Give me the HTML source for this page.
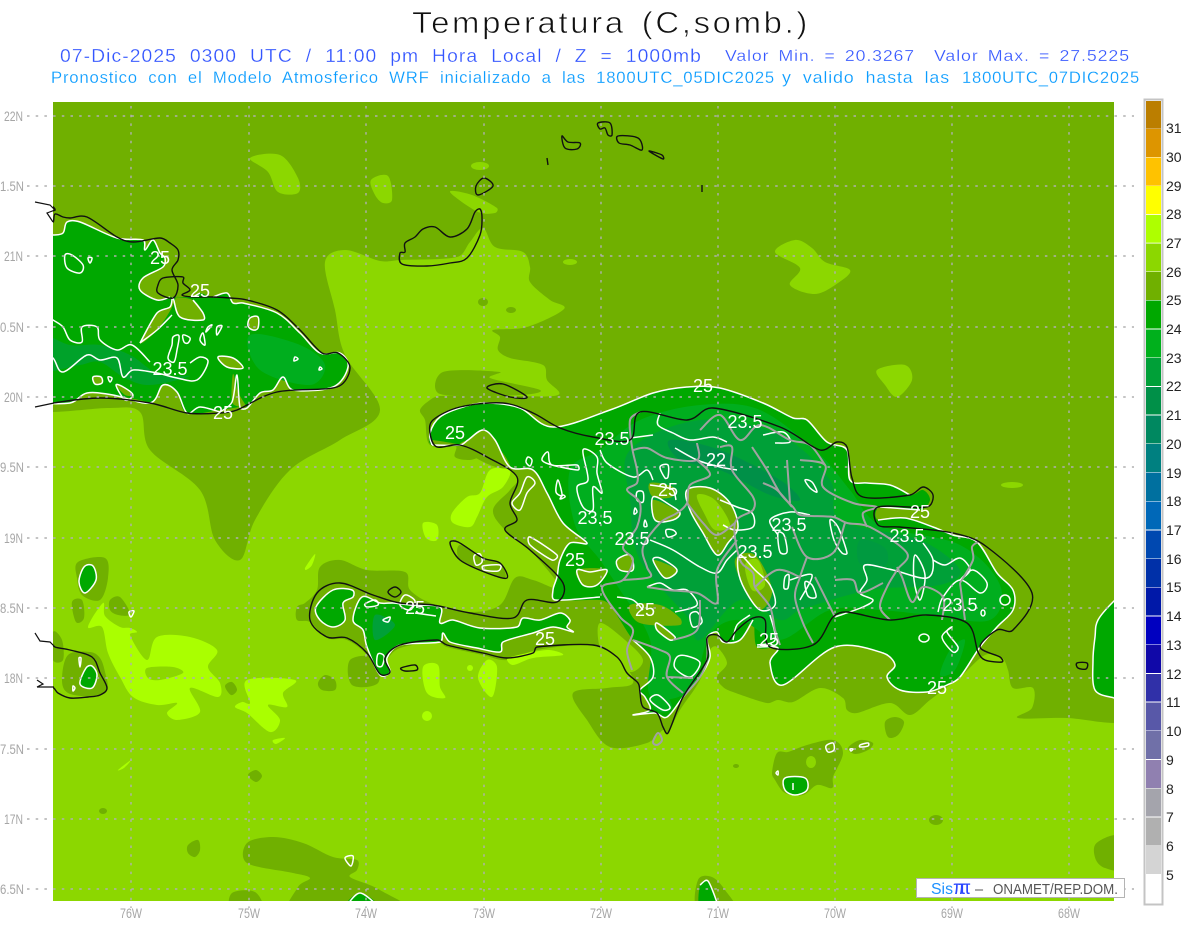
<!DOCTYPE html>
<html><head><meta charset="utf-8"><title>Temperatura</title>
<style>
html,body{margin:0;padding:0;background:#fff}
svg{display:block}
text{font-family:"Liberation Sans",sans-serif}
.ax{fill:#a6a6a6;font-size:14px}
.lb{fill:#fff;font-size:18px;text-anchor:middle}
.cb{fill:#222;font-size:14px}
.w{fill:none;stroke:#fff;stroke-width:1.5;stroke-linejoin:round}
.k{fill:none;stroke:#111;stroke-width:1.4;stroke-linejoin:round}
.g{fill:none;stroke:#a2a2a2;stroke-width:2;stroke-linejoin:round}
.d{fill:#70b000}.l{fill:#8cd700}.y{fill:#aaff00}.v{fill:#00a800}
</style></head><body>
<svg width="1200" height="927" viewBox="0 0 1200 927" xmlns="http://www.w3.org/2000/svg">
<rect width="1200" height="927" fill="#fff"/>
<text x="412" y="33" font-size="31" textLength="398" lengthAdjust="spacingAndGlyphs" fill="#111" stroke="#fff" stroke-width=".7" style="letter-spacing:2.5px;word-spacing:4px">Temperatura (C,somb.)</text>
<g fill="#3355ff" stroke="#fff" stroke-width=".25">
<text x="60" y="62" font-size="18" textLength="642" lengthAdjust="spacingAndGlyphs" style="letter-spacing:1px;word-spacing:6px">07-Dic-2025 0300 UTC / 11:00 pm Hora Local / Z = 1000mb</text>
<text x="725" y="61" font-size="16" textLength="190" lengthAdjust="spacingAndGlyphs" style="letter-spacing:.8px;word-spacing:3px">Valor Min. = 20.3267</text>
<text x="934" y="61" font-size="16" textLength="196" lengthAdjust="spacingAndGlyphs" style="letter-spacing:.8px;word-spacing:3px">Valor Max. = 27.5225</text>
</g>
<g fill="#0a9cff" font-size="17" stroke="#fff" stroke-width=".2">
<text x="51" y="83" textLength="724" lengthAdjust="spacingAndGlyphs" style="letter-spacing:.8px;word-spacing:5px">Pronostico con el Modelo Atmosferico WRF inicializado a las 1800UTC_05DIC2025</text>
<text x="782" y="83" textLength="168" lengthAdjust="spacingAndGlyphs" style="letter-spacing:.8px;word-spacing:5px">y valido hasta las</text>
<text x="962" y="83" textLength="178" lengthAdjust="spacingAndGlyphs" style="letter-spacing:.8px">1800UTC_07DIC2025</text>
</g>

<svg id="map" x="53" y="102" width="1061" height="799" viewBox="53 102 1061 799">
<rect x="53" y="102" width="1061" height="799" class="l"/>
<!-- dark band north / east -->
<path class="d" d="M-20,60L1200,60L1200,723L1114,723L1067,718L1018,718L1032,708L1033,688L1013,688L1008,670L1002,658L985,655L960,677L930,700L910,715L890,703L857,713L847,710L843,698L820,688L793,702L778,700L767,703L733,692L723,687L717,677L727,663L717,647L710,650L700,680L680,710L668,733L663,730L647,743L610,747L587,720L573,693L607,688L633,683L620,660L593,645L537,650L507,660L483,655L447,647L437,642L400,648L387,660L380,677L367,655L347,640L327,638L310,622L297,620L297,607L305,603L317,590L320,567L340,560L367,570L405,572L410,590L433,604L470,612L500,605L515,578L533,580L560,588L530,550L505,530L493,510L510,490L517,477L487,457L470,460L455,457L455,445L430,445L425,420L420,410L430,400L440,396L510,396L558,395L547,380L543,365L510,358L498,350L500,337L493,330L527,327L564,309L550,300L530,282L530,267L523,252L495,247L483,228L470,242L457,257L400,260L380,261L345,250L325,262L335,310L345,355L380,410L340,440L290,470L255,520L240,560L215,540L200,490L150,450L140,412L110,408L53,412L-20,412Z"/>
<path class="d" d="M443,372L500,372L490,378L540,390L520,395L440,394Z"/>
<!-- light patches in the dark -->
<g class="l">
<path d="M371,180L388,176L392,200L383,203L375,195Z"/>
<path d="M250,158L280,155L298,178L298,193L278,192L268,172Z"/>
<path d="M450,192L472,195L497,208L495,213L478,212Z"/>
<ellipse cx="480" cy="166" rx="9" ry="4"/><ellipse cx="570" cy="262" rx="7" ry="3"/>
<path d="M775,252L795,240L812,248L825,262L850,270L838,283L815,294L790,285L800,268Z"/>
<path d="M877,370L905,365L912,380L897,397L885,385Z"/>
<ellipse cx="1012" cy="485" rx="11" ry="3"/>
<path d="M600,623L625,640L643,660L630,672L612,655L600,648Z"/>
</g>
<!-- dark blobs on light -->
<g class="d">
<ellipse cx="483" cy="302" rx="5" ry="4"/><ellipse cx="511" cy="310" rx="5" ry="3"/>
<path d="M78,562L105,558L108,578L100,600L82,595L77,578Z"/>
<path d="M72,602L82,600L84,618L76,622Z"/>
<path d="M110,600L120,597L130,614L118,615L110,610Z"/>
<path d="M68,655L90,652L100,658L105,672L107,690L90,696L68,693L62,680Z"/>
<path d="M53,632L62,640L63,660L53,660Z"/>
<path d="M225,686L232,682L237,690L231,695Z"/>
<path d="M318,683L325,675L335,680L335,690L322,690Z"/>
<path d="M248,775L256,770L262,776L256,782Z"/>
<path d="M188,845L198,840L200,850L195,857L188,853Z"/>
<ellipse cx="103" cy="811" rx="4" ry="3"/>
<path d="M247,843L273,837L303,843L333,857L357,860L357,870L350,877L380,890L410,915L290,915L298,887L310,878L293,873L247,863Z"/>
<path d="M232,893L255,892L262,910L232,910Z"/>
<path d="M772,773L777,753L788,752L807,745L833,740L843,753L833,777L832,788L817,785L803,795L785,793L775,780Z"/>
<path d="M848,748L860,740L873,743L868,750L855,754Z"/>
<path d="M885,722L895,717L904,722L898,735L888,737Z"/>
<ellipse cx="936" cy="820" rx="7" ry="5"/>
<ellipse cx="736" cy="766" rx="3" ry="2"/>
<path d="M1095,845L1110,836L1120,838L1120,868L1105,868L1096,860Z"/>
<path d="M698,880L712,877L725,890L735,910L698,910Z"/>
<path d="M350,660L375,658L378,683L352,685Z"/>
</g>
<ellipse class="l" cx="811" cy="762" rx="5" ry="6"/>
<!-- bright yellow-green -->
<g class="y">
<path fill-rule="evenodd" d="M88,627L103,603L105,616L120,627L130,628L137,632L130,635L147,660L157,637L190,637L217,650L208,667L220,683L218,697L190,688L200,712L177,720L167,713L177,703L157,705L133,697L120,677L108,653L102,627ZM147,668L173,667L183,673L160,680L148,678Z"/>
<path d="M247,680L295,680L283,693L287,707L268,705L280,720L270,732L247,713L235,707L242,702L250,703Z"/>
<path d="M305,568L315,554L312,565L306,570Z"/><path d="M118,770L131,760L124,768Z"/>
<path d="M273,740L285,738L276,744Z"/>
<path d="M423,667L438,665L440,687L445,698L427,693Z"/>
<path d="M478,678L487,660L497,667L492,697Z"/>
<path d="M508,658L547,650L563,655L533,658L513,665Z"/>
<circle cx="427" cy="716" r="5"/><circle cx="470" cy="668" r="3"/>
<path d="M452,513L467,497L480,493L490,470L510,470L503,487L487,497L477,517L470,527L453,523Z"/>
<path d="M423,523L437,525L437,540L426,538Z"/>
</g>

<!-- CUBA -->
<path class="v" d="M30,235L53,235L63,233L67,222L80,222L117,238L143,240L145,250L153,240L160,253L165,258L163,267L143,278L140,290L157,300L170,297L193,297L200,293L213,297L227,293L233,303L243,303L277,313L300,333L320,353L340,353L348,367L333,387L293,390L283,377L273,390L260,393L247,408L240,407L220,410L187,413L177,392L163,385L150,403L113,395L87,393L70,403L53,403L30,403Z"/>
<path fill="#00a038" d="M40,335L70,345L100,345L130,355L160,375L190,376L150,385L125,378L100,362L80,365L40,370Z" opacity=".75"/>
<path fill="#00ae1e" d="M250,335L300,345L325,365L310,385L260,370Z"/>
<g class="d">
<path d="M140,343L157,313L170,307L173,298L180,317L203,320L203,313L193,300L170,297L157,300L140,290L143,278L163,267L165,258L180,262L175,300L157,330Z"/>
<path d="M218,357L233,358L243,368L227,367Z"/>
<path d="M250,318L258,317L258,328L253,330L248,326Z"/>
<path d="M116,385L125,388L133,395L125,395Z"/>
<path d="M93,377L101,377L102,383L95,384Z"/>
<path d="M95,395L113,395L150,403L100,400Z"/>
<path d="M233,374L238,392L247,408L240,407L232,402Z"/>
</g>
<g class="w">
<path d="M30,236L53,235L63,233L67,222L80,222L117,238L143,240L145,250L153,240L160,253L165,258L163,267L143,278L140,290L157,300L170,297"/>
<path d="M193,297L200,293M213,297L227,293L233,303L243,303L277,313L300,333L320,353L340,353L348,367L333,387L293,390L283,377L273,390L260,393L247,408L240,407L237,375L232,402L220,412"/>
<path d="M30,403L70,403L87,393L113,395L150,403L163,385L177,392L187,413L200,407L220,412"/>
<path d="M140,343L157,313L170,307L173,298L180,317L203,320L203,313L193,300"/>
<path d="M140,343L157,330L172,315"/>
<path d="M40,312L53,320L63,327L70,340L82,342L82,327L97,327L100,340L117,350L132,345L150,362"/>
<path d="M40,350L53,358L63,372L87,355L100,360L117,358L123,377L133,370L157,373L177,378L197,380L208,362L200,357L190,363"/>
<path d="M65,255L72,255L83,265L80,273L67,268Z"/><path d="M88,258L92,258L90,263Z"/>
<path d="M218,357L233,358L243,368L227,367Z"/>
<path d="M250,318L258,317L258,328L253,330L248,326Z"/>
<path d="M93,377L101,377L102,383L95,384Z"/><path d="M116,385L125,388L133,395L125,400Z"/>
<path d="M173,337L179,336L177,350L174,362L168,358L172,345Z"/>
<path d="M183,335L190,338L188,343L184,342Z"/><path d="M203,333L205,345L200,340Z"/>
<path d="M208,327L212,325L206,332Z"/><path d="M217,327L222,326L217,335Z"/>
<path d="M108,377L112,378L110,382Z"/>
<path d="M295,357L298,359L294,361Z"/><path d="M320,367L322,369L319,370Z"/>
</g>

<!-- HISPANIOLA green -->
<path class="v" d="M432,445L430,433L440,417L463,407L487,403L520,408L553,427L610,410L653,393L687,387L720,388L763,403L793,418L807,420L827,442L847,450L850,480L867,483L890,485L910,495L923,490L930,500L920,510L880,507L878,520L905,518L933,527L953,535L977,542L997,573L1013,590L1013,610L997,627L980,647L960,677L947,685L927,692L900,690L887,677L895,665L883,653L835,647L783,685L770,663L778,648L757,647L753,620L740,640L723,642L717,632L707,638L710,657L700,677L683,697L667,717L655,713L633,715L650,710L645,697L640,690L653,677L650,657L633,640L620,620L610,605L600,600L555,600L553,590L557,577L560,560L570,543L587,543L563,523L547,493L533,470L510,467L495,440L483,430L468,440L460,445Z"/>
<path class="v" d="M353,620L362,597L380,603L393,603L410,605L440,607L440,623L453,620L480,628L517,627L523,618L540,620L560,613L570,620L567,627L573,632L553,627L533,633L503,642L500,652L477,648L450,642L443,633L440,642L400,645L387,658L390,672L380,675L367,647L363,630Z"/>
<path class="v" d="M316,607L333,590L352,590L353,597L343,603L345,620L333,627L320,620Z"/>
<!-- inner greens -->
<path fill="#00ae1e" d="M570,470L600,450L640,420L700,405L760,410L820,455L850,490L880,525L960,545L1000,585L990,620L930,615L880,610L830,610L780,640L740,620L710,635L690,690L650,695L650,640L620,590L600,560L575,525Z"/>
<path fill="#00a038" d="M630,450L700,420L780,435L830,480L840,520L920,540L960,570L940,585L870,590L800,610L780,620L740,600L700,640L690,620L640,560L630,500Z"/>
<path fill="#009048" d="M670,440L720,450L780,480L800,500L770,495L720,470L680,460Z"/>
<path fill="#009a40" d="M860,540L885,548L885,566L860,564Z"/>
<path fill="#00a038" d="M375,615L395,625L375,640Z"/><path fill="#00ae1e" d="M650,700L665,695L672,708L660,712Z"/>
<path fill="#00ae1e" d="M950,650L965,640L955,670L940,675Z"/>
<!-- olive patches inside -->
<g class="d">
<path d="M687,490L710,488L730,503L738,527L728,543L717,555L703,533L690,510Z"/>
<path d="M735,560L755,555L772,590L760,610L745,590Z"/>
<path d="M650,483L673,487L672,497L653,497Z"/>
<path d="M653,500L680,513L673,520L655,520Z"/>
<path d="M617,560L630,555L633,570L620,570Z"/>
<path d="M653,560L677,570L665,578Z"/>
<path d="M657,623L675,637L670,640L657,630Z"/>
<path d="M630,605L660,605L680,618L680,625L650,625L635,620Z"/>
<path d="M530,537L557,555L552,560L530,545Z"/>
<path d="M470,440L495,445L510,467L490,465L460,447Z"/>
<path d="M520,493L527,477L535,483L527,493L520,510L512,503Z"/>
<path d="M430,440L460,445L440,447Z"/>
<path d="M460,545L483,558L500,563L505,578L485,572L460,560Z"/>
<path d="M577,570L607,570L597,585L583,585Z"/>
</g>
<g class="l"><path d="M697,495L715,500L730,525L715,530L705,515Z"/><path d="M745,565L758,560L765,585L752,590Z"/></g>
<!-- east & bottom green -->
<path class="v" d="M1120,598L1114,601L1098,620L1095,637L1093,660L1095,690L1114,698L1120,700Z"/>
<path class="v" d="M347,905L360,893L377,905Z"/>
<path class="v" d="M700,910L700,885L708,881L718,910Z"/>
<path class="v" d="M785,778L805,778L807,790L795,795L785,790Z"/>
<path class="v" d="M84,567L93,566L96,580L85,593L79,582Z"/>
<path class="v" d="M86,668L92,666L97,675L92,688L80,684Z"/>
<!-- contours -->
<g class="w">
<path d="M432,445L430,433L440,417L463,407L487,403L520,408L553,427L610,410L653,393L687,387L720,388L763,403L793,418L807,420L827,442L847,450L850,480L867,483L890,485L910,495"/>
<path d="M880,507L920,510M878,520L905,518L933,527L953,535L977,542L997,573L1013,590L1013,610L997,627L980,647L960,677L947,685L927,692L900,690L887,677L895,665L883,653L835,647L783,685L770,663L778,648L757,647"/>
<path d="M432,445L460,445L468,440L483,430L495,440L510,467L533,470L547,493L563,523L587,543L570,543L560,560L557,577L553,590L555,600L600,597"/>
<path d="M353,620L362,597L380,603L393,603L410,605L440,607L440,623L453,620L480,628L517,627L523,618L540,620L560,613L570,620L567,627L573,632L553,627L533,633L503,642L500,652L477,648L450,642L443,633L440,642L400,645L387,658L390,672L380,675L367,647L363,630Z"/>
<path d="M316,607L333,590L352,590L353,597L343,603L345,620L333,627L320,620Z"/>
<path d="M1120,598L1114,601L1098,620L1095,637L1093,660L1095,690L1114,698L1120,700"/>
<path d="M347,905L360,893L377,905"/>
<path d="M700,885L708,881L718,905"/>
<path d="M785,778L805,778L807,790L795,795L785,790Z"/><path d="M793,783L793,790"/>
<path d="M84,567L93,566L96,580L85,593L79,582Z"/>
<path d="M86,668L92,666L97,675L92,688L80,684Z"/><path d="M79,658L81,658L80,667Z"/><path d="M73,686L75,688L73,691Z"/>
<path d="M129,612L134,611L131,617Z"/>
<path d="M826,746L833,743L834,750L828,752Z"/><path d="M860,745L868,743L868,746L860,747Z"/><path d="M850,749L853,749L851,751Z"/>
<path d="M345,858L353,856L351,866Z"/>
<path d="M776,773L778,771L778,775Z"/>
<path d="M378,654L384,656L382,666L377,665Z"/><path d="M383,620L390,617L388,622Z"/>
<path d="M365,604L375,600L378,605L367,607Z"/>
<path d="M405,595L415,601L410,610L400,605Z"/>
<path d="M415,613L436,616"/>
<!-- Haiti interior -->
<path d="M583,450L597,457L597,473L602,493L593,487L593,510L583,507L577,487L588,480Z"/>
<path d="M542,460L548,452L552,465L577,465L578,470L552,465Z"/>
<path d="M528,457L532,460L530,466L526,462Z"/><path d="M558,480L562,495L556,492Z"/><path d="M563,495L565,497L560,499Z"/>
<path d="M527,477L535,483L527,493L520,510L512,503L520,493Z"/>
<path d="M530,537L557,555L552,560L530,545Z"/>
<path d="M474,556L480,554L482,562L476,565Z"/><path d="M483,566L500,565L498,571L484,570Z"/>
<path d="M577,570L590,572L607,570L597,585L583,585Z"/>
<path d="M600,450L607,463L633,477L647,470L653,480"/>
<path d="M660,413L658,425L673,433L690,440L713,437L727,442"/>
<path d="M630,438L653,435"/>
<path d="M675,448L697,460L720,467L737,470"/>
<path d="M660,467L668,465L668,477L665,478Z"/>
<path d="M637,492L643,492L643,502L637,500Z"/>
<path d="M650,485L663,487L673,490L676,500"/>
<path d="M653,497L655,520L673,520L680,513L670,505Z"/>
<path d="M635,508L637,512L634,514Z"/><path d="M645,520L647,526L644,526Z"/>
<path d="M666,530L673,530L676,534L668,537Z"/>
<path d="M650,540L673,550L700,567L717,573L727,560L737,550"/>
<path d="M617,560L630,555L633,570L620,570Z"/><path d="M653,560L660,558L677,570L665,578Z"/>
<path d="M647,587L660,583L673,590L687,590L697,605L675,612"/>
<path d="M617,597L633,600L643,610"/>
<path d="M687,490L710,488L730,503L738,527L728,543L717,555L703,533L690,510Z"/>
<!-- Barahona -->
<path d="M633,640L650,657L653,677L640,690L645,697L650,710L633,715L655,713L667,717L683,697L700,677L710,657L707,638L717,632L723,642L740,640L753,620"/>
<path d="M657,623L675,637L670,640L657,630Z"/>
<path d="M677,657L687,656L700,663L690,677L675,668Z"/>
<path d="M650,700L658,695L670,707L663,710Z"/>
<path d="M690,615L697,612L702,622L693,627Z"/>
<!-- DR interior -->
<path d="M763,435L783,432L790,442L775,443"/>
<path d="M720,500L737,507L752,513L753,527L735,530L723,525"/>
<path d="M778,533L784,535L787,552L780,552Z"/>
<path d="M785,577L789,575L788,588L784,588Z"/>
<path d="M805,582L812,585L816,597L808,596Z"/>
<path d="M805,480L812,482L817,492L810,488Z"/>
<path d="M830,520L838,527L847,553L842,553L834,540Z"/>
<path d="M835,617L863,607L873,600L860,593L867,580L865,565L893,570L927,578L933,560L923,543"/>
<path d="M933,560L945,565L960,558L970,570L960,580L973,570L987,583L980,593L960,580L943,597L938,612"/>
<ellipse cx="1005" cy="600" rx="5" ry="5" transform="rotate(35 1005 600)"/><ellipse cx="983" cy="613" rx="2" ry="3"/>
<path d="M942,637L952,627L947,632L958,647L953,652Z"/>
<ellipse cx="924" cy="638" rx="5" ry="4"/>
<path d="M740,555L755,570L770,585L775,605L760,610L745,590L738,570Z"/>
<path d="M778,535L770,520L790,512L810,515"/>
<path d="M800,600L812,575L790,580"/>
<path d="M915,555L925,575L920,600L914,580Z"/>
<path d="M770,615L775,640L757,645"/>
<path d="M733,640L737,625L750,615"/>
</g>

<!-- provincial borders -->
<g class="g">
<path d="M640,412L630,420L632,447L637,470L637,483L627,490L640,503L637,527L623,547L633,560L623,580L602,588L620,617L633,630L627,650L632,670"/>
<path d="M720,447L732,447L732,470L753,497L753,510L735,523L740,560L753,573L755,587L770,607L775,630L780,645"/>
<path d="M752,447L767,470L780,493L793,507L800,515L833,517L847,523L870,527L907,553L897,570L887,587L880,607L890,620"/>
<path d="M787,460L790,503M800,460L825,465L823,487L853,503L877,507L863,513L867,527"/>
<path d="M763,483L777,490L792,507M792,527L807,557L833,553L845,523M800,577L777,570L755,587M807,557L800,577L795,597L803,623L813,643"/>
<path d="M815,577L830,607L835,617M835,580L853,580L860,593L883,583"/>
<path d="M897,567L902,577L912,602L923,587L943,597L942,620M960,583L965,620M960,583L973,560L972,547L978,542"/>
<path d="M633,450L647,448L667,458L697,460L697,443M697,460L710,475L690,485L687,503L677,513L660,523L643,547L647,567L650,577L623,580"/>
<path d="M647,587L667,590L697,593L717,603L717,570L737,540M687,503L703,523L717,535L735,523"/>
<path d="M700,430L720,415L740,440L760,425L790,440L810,445L825,465"/>
<path d="M633,640L660,650L670,657L667,677L683,693M667,677L693,678M673,640L697,630L700,600"/>
<path d="M653,742L658,733L662,740L657,745Z"/>
<path d="M683,697L700,677L707,660L707,638"/>
</g>
<!-- coast -->
<g class="k">
<path d="M433,420L460,407L503,403L533,413L560,428L593,437L630,440L640,412L687,420L713,408L780,427L820,450L837,442L847,447L852,478L863,497L910,495L923,487L933,495L927,507L878,507L878,525L900,527L953,533L987,547L1032,593L1013,630L997,630L980,647L1000,657L1002,662L985,660L978,652L967,623L927,615L890,620L847,612L833,617L813,645L770,647L765,620L753,618L737,630L727,642L717,635L707,638L707,660L683,697L668,733L663,727L657,713L643,707L640,693L638,683L627,673L617,657L593,645L537,647L533,653L507,658L483,653L447,645L437,640L400,645L385,658L390,672L380,674L367,653L347,638L327,637L310,620L317,593L340,583L373,595L400,603L433,605L470,613L513,618L527,600L557,602L563,583L530,550L505,530L517,520L510,503L517,477L487,457L460,445L437,447L430,433Z"/>
<path d="M37,687L52,687L58,693L70,698L88,697L100,695L107,688L100,673L92,657L70,650L55,647L50,642L40,641L35,633"/>
<path d="M35,407L53,403L100,398L150,403L187,413L220,413L237,410L277,392L337,387L350,368L338,353L322,353L300,330L277,310L247,300L230,298L213,297L193,297L182,295L190,290L183,283L183,277L163,278L158,285L158,293L173,298L178,285L172,270L178,260L178,250L170,243L160,238L133,242L117,237L87,217L70,218L63,217L55,214L53,222L47,213L55,210L50,205L35,202"/>
<path d="M402,264L400,253L405,252L405,243L415,237L423,229L435,227L450,237L467,229L475,212L480,209L482,217L480,235L467,258L450,263L427,266Z"/>
<path d="M476,186L484,178L493,186L478,195Z"/>
<path d="M562,136L568,142L580,143L577,149L565,148Z"/><path d="M598,123L610,123L612,135L608,135L605,128L600,129Z"/>
<path d="M618,136L638,138L642,150L630,145L619,143Z"/><path d="M649,151L662,155L663,159Z"/>
<path d="M547,158L548,165"/><path d="M702,185L702,192"/>
<path d="M487,388L503,384L527,397L510,397Z"/>
<path d="M450,543L458,542L483,558L500,563L507,578L487,573L460,560Z"/>
<path d="M388,592L395,587L401,592L395,597Z"/>
<path d="M401,668L415,665L417,670L405,671Z"/>
<path d="M1077,663L1087,663L1086,669L1078,668Z"/>
</g>
</svg>

<!-- coast fragments running into the white margin -->
<path d="M35,202L50,205L55,210L47,213L53,222" fill="none" stroke="#111" stroke-width="1.2"/>
<path d="M35,407L54,403" fill="none" stroke="#111" stroke-width="1.2"/>
<path d="M35,633L40,641L50,642L55,647" fill="none" stroke="#111" stroke-width="1.2"/>
<path d="M37,687L54,687M37,680L43,684L37,687" fill="none" stroke="#111" stroke-width="1.2"/>

<!-- grid -->
<g stroke="#b0b0b0" stroke-width="1.4" stroke-dasharray="2.500 6.200" fill="none">
<path d="M27,116H1134M27,186H1134M27,256H1134M27,327H1134M27,397H1134M27,467H1134M27,538H1134M27,608H1134M27,678H1134M27,749H1134M27,819H1134M27,889H1134"/>
<path d="M131,106V908M249,106V908M366,106V908M484,106V908M601,106V908M718,106V908M835,106V908M952,106V908M1069,106V908"/>
</g>

<!-- contour labels -->
<g class="lb">
<text x="160" y="264">25</text><text x="200" y="297">25</text><text x="170" y="375">23.5</text><text x="223" y="419">25</text>
<text x="455" y="439">25</text><text x="703" y="392">25</text><text x="612" y="445">23.5</text><text x="745" y="428">23.5</text>
<text x="716" y="466">22</text><text x="668" y="496">25</text><text x="595" y="524">23.5</text><text x="632" y="545">23.5</text>
<text x="575" y="566">25</text><text x="789" y="531">23.5</text><text x="755" y="558">23.5</text><text x="920" y="518">25</text>
<text x="907" y="542">23.5</text><text x="960" y="611">23.5</text><text x="415" y="614">25</text><text x="645" y="616">25</text>
<text x="545" y="645">25</text><text x="769" y="646">25</text><text x="937" y="694">25</text>
</g>

<!-- axes -->
<g class="ax">
<text x="4" y="121" textLength="19" lengthAdjust="spacingAndGlyphs">22N</text><text x="0" y="191" textLength="24" lengthAdjust="spacingAndGlyphs">1.5N</text><text x="4" y="261" textLength="19" lengthAdjust="spacingAndGlyphs">21N</text>
<text x="0" y="332" textLength="24" lengthAdjust="spacingAndGlyphs">0.5N</text><text x="4" y="402" textLength="19" lengthAdjust="spacingAndGlyphs">20N</text><text x="0" y="472" textLength="24" lengthAdjust="spacingAndGlyphs">9.5N</text>
<text x="4" y="543" textLength="19" lengthAdjust="spacingAndGlyphs">19N</text><text x="0" y="613" textLength="24" lengthAdjust="spacingAndGlyphs">8.5N</text><text x="4" y="683" textLength="19" lengthAdjust="spacingAndGlyphs">18N</text>
<text x="0" y="754" textLength="24" lengthAdjust="spacingAndGlyphs">7.5N</text><text x="4" y="824" textLength="19" lengthAdjust="spacingAndGlyphs">17N</text><text x="0" y="894" textLength="24" lengthAdjust="spacingAndGlyphs">6.5N</text>
<text x="120" y="918" textLength="22" lengthAdjust="spacingAndGlyphs">76W</text><text x="238" y="918" textLength="22" lengthAdjust="spacingAndGlyphs">75W</text><text x="355" y="918" textLength="22" lengthAdjust="spacingAndGlyphs">74W</text>
<text x="473" y="918" textLength="22" lengthAdjust="spacingAndGlyphs">73W</text><text x="590" y="918" textLength="22" lengthAdjust="spacingAndGlyphs">72W</text><text x="707" y="918" textLength="22" lengthAdjust="spacingAndGlyphs">71W</text>
<text x="824" y="918" textLength="22" lengthAdjust="spacingAndGlyphs">70W</text><text x="941" y="918" textLength="22" lengthAdjust="spacingAndGlyphs">69W</text><text x="1058" y="918" textLength="22" lengthAdjust="spacingAndGlyphs">68W</text>
</g>

<!-- logo box -->
<rect x="916.5" y="878.5" width="208" height="19" fill="#fff" stroke="#b4b4b4"/>
<text x="931" y="894" font-size="15.5" fill="#1e90ff" textLength="22" lengthAdjust="spacingAndGlyphs">Sis</text>
<text x="953" y="894" font-size="19" fill="#2a46ff" textLength="18" lengthAdjust="spacing">ππ</text>
<text x="975" y="894" font-size="14.5" fill="#555">–</text>
<text x="993" y="894" font-size="14.5" fill="#555" textLength="125" lengthAdjust="spacingAndGlyphs">ONAMET/REP.DOM.</text>

<!-- colorbar -->
<rect x="1144.5" y="99.5" width="18" height="805" fill="#fff" stroke="#c4c4c4" stroke-width="2"/>
<g>
<rect x="1146" y="101" width="15" height="27.7" fill="#bb7e00"/>
<rect x="1146" y="129" width="15" height="28" fill="#dd9500"/>
<rect x="1146" y="157.5" width="15" height="28.2" fill="#ffc200"/>
<rect x="1146" y="186" width="15" height="28.2" fill="#ffff00"/>
<rect x="1146" y="215" width="15" height="27.7" fill="#aeff00"/>
<rect x="1146" y="243.5" width="15" height="28" fill="#8cd700"/>
<rect x="1146" y="272" width="15" height="28" fill="#70b000"/>
<rect x="1146" y="300.5" width="15" height="28" fill="#00a800"/>
<rect x="1146" y="329.5" width="15" height="28" fill="#00b01c"/>
<rect x="1146" y="358" width="15" height="28" fill="#00a038"/>
<rect x="1146" y="387" width="15" height="27.5" fill="#009048"/>
<rect x="1146" y="415.5" width="15" height="28" fill="#008860"/>
<rect x="1146" y="444" width="15" height="28" fill="#008080"/>
<rect x="1146" y="472.5" width="15" height="28.5" fill="#00709f"/>
<rect x="1146" y="501.5" width="15" height="28" fill="#0068b8"/>
<rect x="1146" y="530.5" width="15" height="28" fill="#0048b0"/>
<rect x="1146" y="559" width="15" height="28" fill="#0030a8"/>
<rect x="1146" y="587.5" width="15" height="28" fill="#0018a8"/>
<rect x="1146" y="616.5" width="15" height="28" fill="#0000c0"/>
<rect x="1146" y="645" width="15" height="28" fill="#1008a8"/>
<rect x="1146" y="674" width="15" height="27.5" fill="#3030a8"/>
<rect x="1146" y="702.5" width="15" height="28" fill="#5858a8"/>
<rect x="1146" y="731" width="15" height="28" fill="#7070a8"/>
<rect x="1146" y="760" width="15" height="28" fill="#9080b0"/>
<rect x="1146" y="788.5" width="15" height="28" fill="#a4a4ac"/>
<rect x="1146" y="817.5" width="15" height="27.5" fill="#b0b0b0"/>
<rect x="1146" y="845" width="15" height="29" fill="#d4d4d4"/>
</g>
<g class="cb">
<text x="1166" y="133">31</text><text x="1166" y="162">30</text><text x="1166" y="191">29</text><text x="1166" y="219">28</text>
<text x="1166" y="248">27</text><text x="1166" y="277">26</text><text x="1166" y="305">25</text><text x="1166" y="334">24</text>
<text x="1166" y="363">23</text><text x="1166" y="391">22</text><text x="1166" y="420">21</text><text x="1166" y="449">20</text>
<text x="1166" y="478">19</text><text x="1166" y="506">18</text><text x="1166" y="535">17</text><text x="1166" y="564">16</text>
<text x="1166" y="592">15</text><text x="1166" y="621">14</text><text x="1166" y="650">13</text><text x="1166" y="679">12</text>
<text x="1166" y="707">11</text><text x="1166" y="736">10</text><text x="1166" y="765">9</text><text x="1166" y="794">8</text>
<text x="1166" y="822">7</text><text x="1166" y="851">6</text><text x="1166" y="880">5</text>
</g>
</svg>
<script>
(function(){
var ps=document.querySelectorAll('#map path');
function f(n){return Math.round(n*10)/10}
function seg(pts,closed){
  var n=pts.length,o='M'+f(pts[0][0])+','+f(pts[0][1]);
  var last=closed?n:n-1;
  function P(i){return closed?pts[(i+n)%n]:pts[Math.max(0,Math.min(n-1,i))]}
  function h(i,len){
    var a=P(i-1),b=P(i+1),x=(b[0]-a[0])/6,y=(b[1]-a[1])/6,m=Math.sqrt(x*x+y*y),c=.4*len;
    if(m>c&&m>0){x*=c/m;y*=c/m}
    return [x,y];
  }
  for(var i=0;i<last;i++){
    var p=P(i),q=P(i+1),len=Math.sqrt(Math.pow(q[0]-p[0],2)+Math.pow(q[1]-p[1],2));
    var h1=h(i,len),h2=h(i+1,len);
    o+='C'+f(p[0]+h1[0])+','+f(p[1]+h1[1])+' '+f(q[0]-h2[0])+','+f(q[1]-h2[1])+' '+f(q[0])+','+f(q[1]);
  }
  return o+(closed?'Z':'');
}
for(var k=0;k<ps.length;k++){
  var d=ps[k].getAttribute('d'),subs=d.split(/(?=M)/),out='';
  for(var s=0;s<subs.length;s++){
    var closed=/Z\s*$/.test(subs[s]),nums=subs[s].match(/-?[\d.]+/g);
    if(!nums)continue;
    var pts=[];
    for(var j=0;j+1<nums.length;j+=2)pts.push([+nums[j],+nums[j+1]]);
    out+=pts.length>2?seg(pts,closed):subs[s];
  }
  ps[k].setAttribute('d',out);
}
})();
</script>
</body></html>
